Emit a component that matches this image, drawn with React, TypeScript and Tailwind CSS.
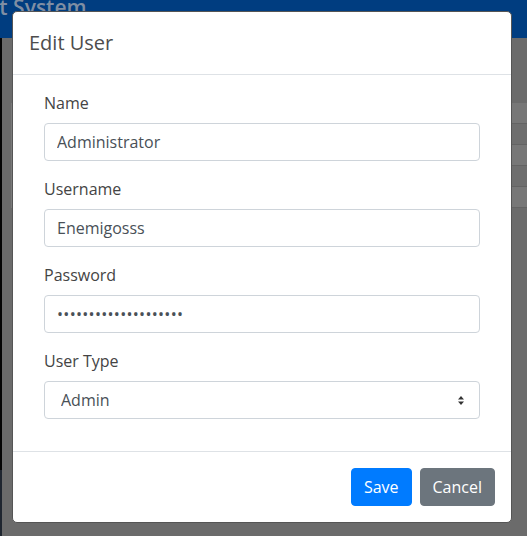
import React from 'react';

const rows = ['bg-[#777777]', 'bg-[#6e6e6e]', 'bg-[#777777]', 'bg-[#6e6e6e]', 'bg-[#777777]'];

const fields = [
  { label: 'Name', value: 'Administrator', type: 'text', extra: '' },
  { label: 'Username', value: 'Enemigosss', type: 'text', extra: '' },
  { label: 'Password', value: 'aaaaaaaaaaaaaaaaaaaa', type: 'password', extra: 'tracking-[0.3px]' },
];

const App = () => {
  return (
    <div className="relative h-[536px] w-[527px] overflow-hidden bg-[#6b6b6b] font-['Open_Sans',sans-serif]">
      {/* page behind the backdrop */}
      <div className="flex h-[38px] items-start bg-[#003d80]">
        <span className="-ml-[14px] -mt-[8px] whitespace-nowrap text-[21px] font-semibold leading-[30px] text-[#7f8ea3]">
          nt System
        </span>
      </div>
      <div className="flex h-[498px]">
        <div className="flex w-[2px] flex-col">
          <div className="h-[432px] bg-[#050505]"></div>
          <div className="flex-1 bg-[#1f2630]"></div>
        </div>
        <div className="flex-1 pt-[65px]">
          <div className="flex flex-col pl-[9px]">
            <div className="border-l border-[#7a7a7a]">
              {rows.map((cls, i) => (
                <div key={i} className={`h-[21px] border-b border-[#636363] ${cls}`}></div>
              ))}
            </div>
          </div>
        </div>
      </div>

      {/* modal */}
      <div className="absolute left-[12px] top-[11px] w-[500px] rounded-[5px] border border-[#555] bg-white">
        <div className="border-b border-[#dee2e6] px-4 py-4">
          <h5 className="text-[20px] leading-[30px] text-[#4d4d4d]">Edit User</h5>
        </div>
        <div className="p-4">
          <div className="px-[15px]">
            {fields.map((f) => (
              <div key={f.label} className="mb-4">
                <label className="mb-2 block text-[16px] leading-[24px] text-[#444]">{f.label}</label>
                <input
                  type={f.type}
                  defaultValue={f.value}
                  className={`block h-[38px] w-full rounded-[4px] border border-[#ced4da] px-3 text-[16px] text-[#495057] outline-none ${f.extra}`}
                />
              </div>
            ))}
            <div className="mb-4">
              <label className="mb-2 block text-[16px] leading-[24px] text-[#444]">User Type</label>
              <div className="relative">
                <select className="block h-[38px] w-full appearance-none rounded-[4px] border border-[#ced4da] bg-white pl-4 text-[16px] text-[#495057] outline-none">
                  <option>Admin</option>
                  <option>User</option>
                </select>
                <svg
                  className="pointer-events-none absolute right-[16px] top-[15px]"
                  width="6"
                  height="9"
                  viewBox="0 0 6 9"
                >
                  <path d="M0 3.5 L3 0 L6 3.5 Z M0 5.5 L6 5.5 L3 9 Z" fill="#333" />
                </svg>
              </div>
            </div>
          </div>
        </div>
        <div className="flex justify-end gap-2 border-t border-[#dee2e6] p-4">
          <button className="h-[38px] rounded-[4px] border border-[#007bff] bg-[#007bff] px-3 text-[16px] text-white">
            Save
          </button>
          <button className="h-[38px] rounded-[4px] border border-[#6c757d] bg-[#6c757d] px-3 text-[16px] text-white">
            Cancel
          </button>
        </div>
      </div>
    </div>
  );
};

export default App;
